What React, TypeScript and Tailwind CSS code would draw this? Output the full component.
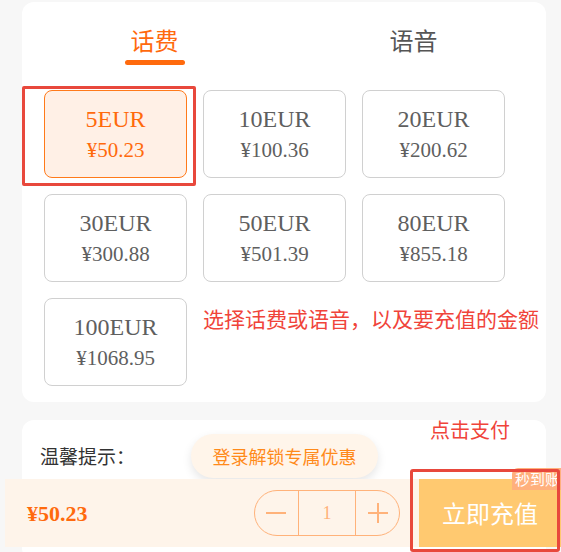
import React from 'react';

const cjk = "font-['Microsoft_YaHei','Noto_Sans_CJK_SC',sans-serif]";
const serif = "font-['Liberation_Serif','Noto_Sans_CJK_SC',serif]";

const plans = [
  { amount: '5EUR', price: '¥50.23' },
  { amount: '10EUR', price: '¥100.36' },
  { amount: '20EUR', price: '¥200.62' },
  { amount: '30EUR', price: '¥300.88' },
  { amount: '50EUR', price: '¥501.39' },
  { amount: '80EUR', price: '¥855.18' },
  { amount: '100EUR', price: '¥1068.95' },
];

const PlanTile: React.FC<{ amount: string; price: string; active: boolean }> = ({ amount, price, active }) => (
  <div
    className={`h-[88px] rounded-[8px] border flex flex-col items-center justify-center ${serif} ${
      active ? 'border-[#ff7a1a] bg-[#fff0e6] text-[#ff6a0d]' : 'border-[#d0d0d0] bg-white text-[#5f5f5f]'
    }`}
  >
    <div className="text-[24px] leading-[28px]">{amount}</div>
    <div className="text-[21px] leading-[26px] mt-[4px]">{price}</div>
  </div>
);

export default function App() {
  return (
    <div className={`relative w-[561px] h-[552px] overflow-hidden bg-[#f7f7f7] pl-[5px] ${cjk}`}>
      <div className="pl-[17px] pr-[15px] pt-[2px]">
        {/* plans card */}
        <div className="bg-white rounded-[12px] h-[400px] pl-[22px]">
          <div className="flex justify-center pr-[22px] pt-[24px]">
            <div className="w-[259px] shrink-0 flex flex-col items-center">
              <div className="text-[24px] leading-[28px] text-[#ff6a0d]">话费</div>
              <div className="mt-[6px] w-[60px] h-[5px] rounded-full bg-[#ff6a0d]" />
            </div>
            <div className="w-[259px] shrink-0 flex flex-col items-center">
              <div className="text-[24px] leading-[28px] text-[#555]">语音</div>
            </div>
          </div>
          <div className="mt-[25px] grid grid-cols-[143px_143px_143px] gap-x-[16px] gap-y-[16px]">
            {plans.map((p, i) => (
              <PlanTile key={p.amount} amount={p.amount} price={p.price} active={i === 0} />
            ))}
          </div>
        </div>

        {/* tips card */}
        <div className="mt-[18px] bg-white rounded-[12px] h-[140px] pl-[18px] pt-[24px]">
          <div className="text-[19px] leading-[24px] text-[#333]">温馨提示：</div>
        </div>
      </div>

      {/* floating login pill */}
      <div className="absolute left-[191px] top-[434px] w-[187px] h-[44px] rounded-full bg-[#fff5ea] shadow-[0_4px_10px_rgba(0,0,0,0.1)] flex items-center justify-center text-[18px] text-[#ff8a1a]">
        登录解锁专属优惠
      </div>

      {/* footer bar */}
      <div className="absolute left-[5px] right-0 top-[479px] h-[68px] bg-[#fef4ea] flex items-center">
        <div className={`ml-[22px] text-[22px] font-bold text-[#ff6a0d] ${serif}`}>¥50.23</div>
        <div className="ml-auto mr-[19px] flex items-center h-[46px] w-[146px] rounded-full border border-[#ffb27a]">
          <div className="w-[43px] h-full flex items-center justify-center">
            <svg width="22" height="22" viewBox="0 0 22 22"><path d="M1 11h20" stroke="#ffb27a" strokeWidth="2" /></svg>
          </div>
          <div className={`w-[59px] h-full border-x border-[#ffb27a] flex items-center justify-center text-[18px] text-[#ffb27a] ${serif}`}>1</div>
          <div className="w-[43px] h-full flex items-center justify-center">
            <svg width="22" height="22" viewBox="0 0 22 22"><path d="M1 11h20M11 1v20" stroke="#ffb27a" strokeWidth="2" /></svg>
          </div>
        </div>
        <div className="w-[142px] h-full bg-[#ffc970] flex items-center justify-center text-[24px] text-white">立即充值</div>
      </div>

      {/* badge */}
      <div className="absolute right-0 top-[468px] h-[22px] pl-[3px] w-[49px] overflow-hidden bg-[#ffb07d] rounded-tl-[6px] text-[15px] leading-[22px] text-white whitespace-nowrap">
        秒到账
      </div>

      {/* annotations */}
      <div className="absolute left-[22px] top-[86px] w-[174px] h-[100px] border-[3px] border-[#e8483c] rounded-[2px]" />
      <div className="absolute left-[203px] top-[304px] text-[21px] leading-[28px] text-[#f0443a] whitespace-nowrap">
        选择话费或语音，以及要充值的金额
      </div>
      <div className="absolute left-[430px] top-[417px] text-[20px] leading-[26px] text-[#f0443a]">点击支付</div>
      <div className="absolute left-[410px] top-[469px] w-[150px] h-[83px] border-[3px] border-[#e8483c] rounded-[3px]" />
    </div>
  );
}
